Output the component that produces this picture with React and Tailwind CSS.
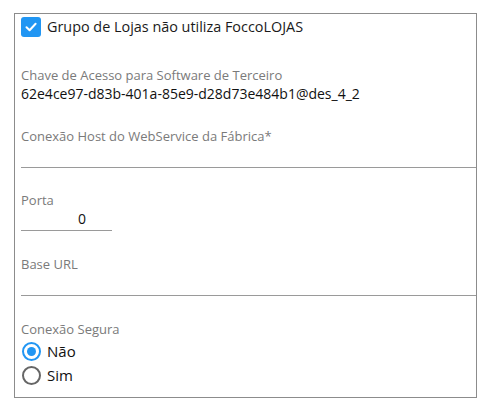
export default function App() {
  const font = { fontFamily: '"Open Sans", "Noto Sans", sans-serif' };
  return (
    <div className="w-[488px] h-[406px] bg-white pt-[13px] pl-[14px]" style={font}>
      <div className="w-[463px] h-[385px] border border-[#8c8c8c] pl-[6px] flex flex-col">
        <label className="flex items-center h-[20px] mt-[3px] gap-[6px]">
          <span className="w-[20px] h-[20px] rounded-[3px] bg-[#2196f3] flex items-center justify-center">
            <svg width="14" height="14" viewBox="0 0 14 14" fill="none">
              <path d="M2.5 7.2 L5.6 10.2 L11.6 3.8" stroke="white" strokeWidth="2" strokeLinecap="round" strokeLinejoin="round" />
            </svg>
          </span>
          <span className="text-[14.4px] leading-[20px] text-[#1a1a1a]">Grupo de Lojas não utiliza FoccoLOJAS</span>
        </label>

        <div className="mt-[30px] text-[13px] leading-[17px] text-[#7a7a7a]">Chave de Acesso para Software de Terceiro</div>
        <div className="text-[14px] leading-[20px] text-[#111]">62e4ce97-d83b-401a-85e9-d28d73e484b1@des_4_2</div>

        <div className="mt-[24px] text-[13px] leading-[17px] text-[#7a7a7a]">Conexão Host do WebService da Fábrica*</div>
        <div className="h-[23px] border-b border-[#9a9a9a]"></div>

        <div className="mt-[24px] text-[13px] leading-[17px] text-[#7a7a7a]">Porta</div>
        <div className="w-[91px] h-[22px] border-b border-[#9a9a9a] text-right pr-[26px] text-[14px] leading-[20px] text-[#111]">0</div>

        <div className="mt-[25px] text-[13px] leading-[17px] text-[#7a7a7a]">Base URL</div>
        <div className="h-[23px] border-b border-[#9a9a9a]"></div>

        <div className="mt-[25px] text-[13px] leading-[17px] text-[#7a7a7a]">Conexão Segura</div>
        <div className="flex items-center h-[22px] mt-[2px] gap-[6px] pl-[1px]">
          <span className="w-[19px] h-[19px] rounded-full border-2 border-[#2196f3] flex items-center justify-center">
            <span className="w-[9px] h-[9px] rounded-full bg-[#2196f3]"></span>
          </span>
          <span className="text-[15px] leading-[20px] text-[#111]">Não</span>
        </div>
        <div className="flex items-center h-[22px] mt-[2px] gap-[6px] pl-[1px]">
          <span className="w-[19px] h-[19px] rounded-full border-2 border-[#666]"></span>
          <span className="text-[15px] leading-[20px] text-[#111]">Sim</span>
        </div>
      </div>
    </div>
  );
}
